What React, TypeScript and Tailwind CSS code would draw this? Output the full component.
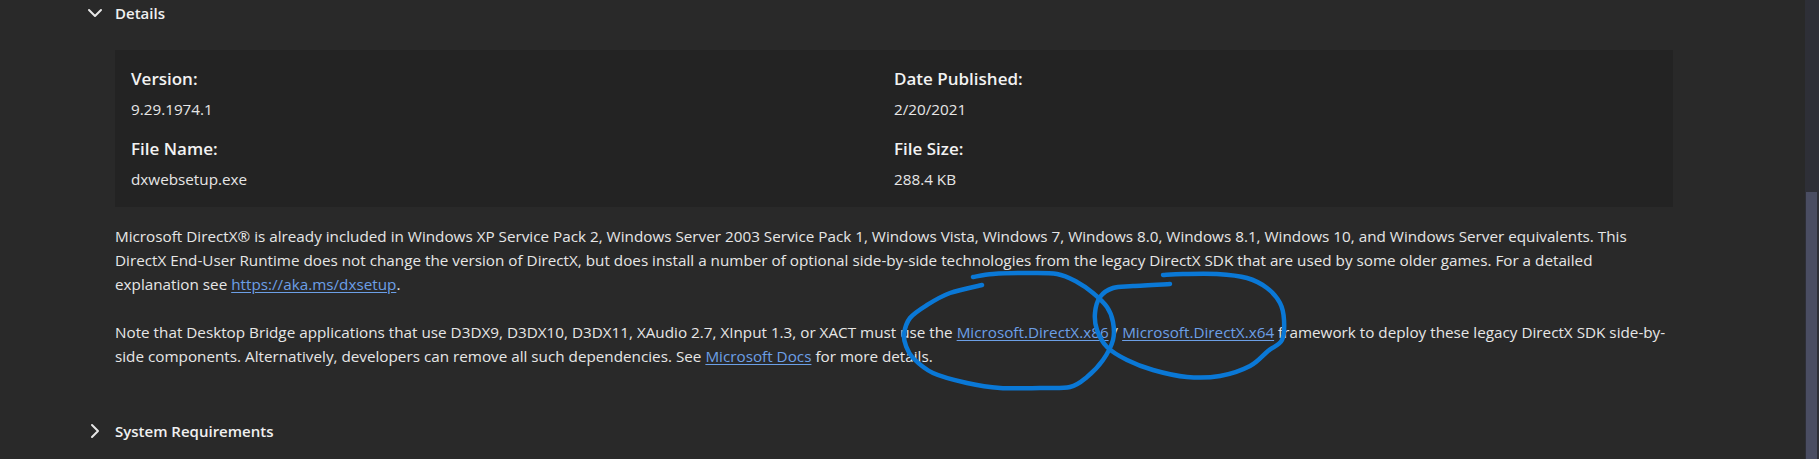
import { ChevronDown, ChevronRight } from 'lucide-react';

type Pt = [number, number];

// hand-drawn pen marks over the screenshot, smoothed through the points
const toPath = (pts: Pt[]) => {
  let d = `M ${pts[0][0]} ${pts[0][1]}`;
  for (let i = 0; i < pts.length - 1; i++) {
    const p0 = pts[i - 1] || pts[i];
    const p1 = pts[i];
    const p2 = pts[i + 1];
    const p3 = pts[i + 2] || p2;
    const c1x = p1[0] + (p2[0] - p0[0]) / 6;
    const c1y = p1[1] + (p2[1] - p0[1]) / 6;
    const c2x = p2[0] - (p3[0] - p1[0]) / 6;
    const c2y = p2[1] - (p3[1] - p1[1]) / 6;
    d += ` C ${c1x} ${c1y} ${c2x} ${c2y} ${p2[0]} ${p2[1]}`;
  }
  return d;
};

const leftLoop: Pt[] = [
  [982, 285], [950, 293], [927, 305], [910, 318], [904, 334], [906, 346], [913, 358],
  [933, 373], [967, 383], [1000, 388], [1040, 388], [1070, 387], [1087, 377], [1103, 360],
  [1113, 340], [1113, 322], [1107, 307], [1093, 293], [1077, 282], [1057, 274], [1027, 273],
  [993, 274], [973, 277],
];

const rightLoop: Pt[] = [
  [1163, 275], [1183, 274], [1217, 274], [1247, 278], [1267, 288], [1280, 303], [1284, 320],
  [1282, 340], [1268, 351], [1250, 366], [1220, 376], [1187, 377], [1153, 370], [1127, 360],
  [1107, 347], [1097, 330], [1095, 313], [1100, 297], [1113, 288], [1133, 286], [1170, 284],
];

const details = [
  { label: 'Version:', value: '9.29.1974.1' },
  { label: 'Date Published:', value: '2/20/2021' },
  { label: 'File Name:', value: 'dxwebsetup.exe' },
  { label: 'File Size:', value: '288.4 KB' },
];

const Link = ({ children }: { children: React.ReactNode }) => (
  <a href="#" className="text-[#6c9fe6] underline underline-offset-2">
    {children}
  </a>
);

const App = () => {
  return (
    <div
      className="relative h-[459px] w-full overflow-hidden bg-[#292929] text-[#e6e6e6]"
      style={{ fontFamily: '"Open Sans", "Noto Sans", sans-serif' }}
    >
      <div className="pl-[83px] pt-px pr-[146px]">
        {/* Details header */}
        <div className="flex items-center gap-2 h-6">
          <ChevronDown size={24} strokeWidth={2} className="text-[#e6e6e6]" />
          <span className="text-[15px] leading-6 font-semibold text-[#f0f0f0]">Details</span>
        </div>

        <div className="pl-8">
          <div className="mt-[25px] grid grid-cols-2 gap-y-4 bg-[#232323] px-4 pt-[17px] pb-4">
            {details.map((d) => (
              <div key={d.label}>
                <p className="text-[17px] leading-6 font-semibold text-[#f2f2f2]">{d.label}</p>
                <p className="mt-[6px] text-[15.25px] leading-6">{d.value}</p>
              </div>
            ))}
          </div>

          <div className="mt-[17px] text-[15.25px] leading-6 whitespace-nowrap">
            <p>
              Microsoft DirectX® is already included in Windows XP Service Pack 2, Windows Server 2003 Service Pack 1,
              Windows Vista, Windows 7, Windows 8.0, Windows 8.1, Windows 10, and Windows Server equivalents. This
              <br />
              DirectX End-User Runtime does not change the version of DirectX, but does install a number of optional
              side-by-side technologies from the legacy DirectX SDK that are used by some older games. For a detailed
              <br />
              explanation see <Link>https://aka.ms/dxsetup</Link>.
            </p>
            <p className="mt-6">
              Note that Desktop Bridge applications that use D3DX9, D3DX10, D3DX11, XAudio 2.7, XInput 1.3, or XACT
              must use the <Link>Microsoft.DirectX.x86</Link> / <Link>Microsoft.DirectX.x64</Link> framework to deploy
              these legacy DirectX SDK side-by-
              <br />
              side components. Alternatively, developers can remove all such dependencies. See{' '}
              <Link>Microsoft Docs</Link> for more details.
            </p>
          </div>
        </div>

        {/* collapsed section */}
        <div className="mt-[51px] flex items-center gap-2 h-6">
          <ChevronRight size={24} strokeWidth={2} className="text-[#e6e6e6]" />
          <span className="text-[15px] leading-6 font-semibold text-[#f0f0f0]">System Requirements</span>
        </div>
      </div>

      {/* scrollbar */}
      <div className="absolute right-0 top-0 flex h-full w-[14px] flex-col bg-[#2e2f37]">
        <div className="h-[192px]" />
        <div className="ml-px w-[11px] flex-1 bg-[#4a4d62]" />
      </div>

      {/* pen annotation */}
      <svg className="pointer-events-none absolute left-0 top-0" width="1819" height="459">
        <path d={toPath(leftLoop)} fill="none" stroke="#0a78d6" strokeWidth={4.5} strokeLinecap="round" strokeLinejoin="round" />
        <path d={toPath(rightLoop)} fill="none" stroke="#0a78d6" strokeWidth={4.5} strokeLinecap="round" strokeLinejoin="round" />
      </svg>
    </div>
  );
};

export default App;
